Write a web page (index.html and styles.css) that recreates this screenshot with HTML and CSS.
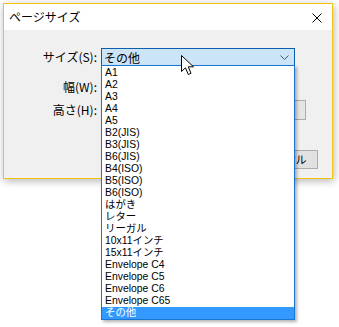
FILE: index.html
```html
<!DOCTYPE html>
<html lang="ja">
<head>
    <meta charset="UTF-8">
    <title>ページサイズ</title>
    <link rel="stylesheet" href="styles.css">
</head>
<body>
    <div class="dialog">
        <div class="titlebar">
            <span class="title">ページサイズ</span>
            <svg class="close" width="10" height="10" viewBox="0 0 10 10">
                <path d="M0.5 0.5 L9.5 9.5 M9.5 0.5 L0.5 9.5" stroke="#000" stroke-width="1"/>
            </svg>
        </div>
        <div class="dialog-body">
            <div class="row row-size">
                <label class="label">サイズ(S):</label>
                <div class="combo">
                    <span>その他</span>
                    <svg class="chevron" width="9" height="5" viewBox="0 0 9 5">
                        <path d="M0.5 0.5 L4.5 4.5 L8.5 0.5" fill="none" stroke="#555" stroke-width="1"/>
                    </svg>
                    <!-- open dropdown list -->
                    <ul class="dropdown">
                        <li>A1</li>
                        <li>A2</li>
                        <li>A3</li>
                        <li>A4</li>
                        <li>A5</li>
                        <li>B2(JIS)</li>
                        <li>B3(JIS)</li>
                        <li>B6(JIS)</li>
                        <li>B4(ISO)</li>
                        <li>B5(ISO)</li>
                        <li>B6(ISO)</li>
                        <li>はがき</li>
                        <li>レター</li>
                        <li>リーガル</li>
                        <li>10x11インチ</li>
                        <li>15x11インチ</li>
                        <li>Envelope C4</li>
                        <li>Envelope C5</li>
                        <li>Envelope C6</li>
                        <li>Envelope C65</li>
                        <li class="selected">その他</li>
                    </ul>
                    <svg class="cursor" width="14" height="21" viewBox="0 0 14 21">
                        <path d="M0.5 0.5 L0.5 16.5 L4.5 12.8 L7.3 19.5 L10 18.3 L7.3 11.8 L12.5 11.8 Z" fill="#fff" stroke="#000" stroke-width="1" stroke-linejoin="miter"/>
                    </svg>
                </div>
            </div>
            <div class="row row-width">
                <label class="label">幅(W):</label>
                <div class="field field-width"></div>
            </div>
            <div class="row row-height">
                <label class="label">高さ(H):</label>
                <div class="field"></div>
            </div>
            <div class="buttons">
                <button class="btn">OK</button>
                <button class="btn">キャンセル</button>
            </div>
        </div>
    </div>
</body>
</html>
```

FILE: styles.css
```css
body {
    margin: 0;
    background: #fff;
    font-family: "Noto Sans CJK JP", "Noto Sans", sans-serif;
    font-size: 12px;
    color: #000;
    width: 339px;
    height: 327px;
    overflow: hidden;
}

.dialog {
    margin: 3px 0 0 3px;
    width: 328px;
    height: 174px;
    border: 1px solid #f1c40f;
    background: #f0f0f0;
    box-shadow: 1px 2px 8px rgba(0, 0, 0, 0.3);
    display: flex;
    flex-direction: column;
}

.titlebar {
    height: 26px;
    background: #fff;
    display: flex;
    align-items: center;
    justify-content: space-between;
    padding: 0 10px 0 5px;
}

.title {
    font-size: 12px;
    line-height: 14px;
}

.close {
    display: block;
    margin-top: 1px;
}

.dialog-body {
    padding: 18px 0 0 0;
    display: flex;
    flex-direction: column;
}

.row {
    display: flex;
    align-items: center;
}

.label {
    width: 93px;
    text-align: right;
    padding-right: 4px;
    font-size: 12px;
    line-height: 14px;
}

.row-size {
    height: 18px;
}

.combo {
    position: relative;
    box-sizing: border-box;
    width: 194px;
    height: 18px;
    border: 1px solid #0b5fab;
    background: #cce4f7;
    display: flex;
    align-items: center;
    justify-content: space-between;
    padding: 0 5px 0 2px;
    font-size: 12px;
}

.chevron {
    display: block;
}

.dropdown {
    position: absolute;
    top: 16px;
    left: -1px;
    z-index: 10;
    width: 194px;
    box-sizing: border-box;
    margin: 0;
    padding: 1px 0 0 0;
    list-style: none;
    background: #fff;
    border: 1px solid #1976d2;
    box-shadow: 2px 2px 3px rgba(0, 0, 0, 0.3);
}

.dropdown li {
    height: 12px;
    line-height: 12px;
    font-family: "Liberation Sans", "Noto Sans CJK JP", sans-serif;
    font-size: 10.4px;
    padding-left: 3px;
    white-space: nowrap;
}

.dropdown li.selected {
    background: #3399ff;
    color: #fff;
}

.cursor {
    position: absolute;
    left: 79px;
    top: 6px;
    z-index: 20;
}

.row-width {
    height: 18px;
    margin-top: 12px;
}

.row-height {
    height: 20px;
    margin-top: 4px;
}

.field {
    box-sizing: border-box;
    width: 205px;
    height: 20px;
    background: #e5e5e5;
    border: 1px solid #adadad;
}

.field-width {
    width: 150px;
    visibility: hidden;
}

.buttons {
    display: flex;
    justify-content: flex-end;
    gap: 8px;
    margin-top: 30px;
    padding-right: 14px;
}

.btn {
    box-sizing: border-box;
    width: 75px;
    height: 19px;
    background: #e1e1e1;
    border: 1px solid #adadad;
    font-family: "Noto Sans CJK JP", sans-serif;
    font-size: 11px;
    letter-spacing: -1px;
    line-height: 15px;
    padding: 0;
    color: #000;
}
```
